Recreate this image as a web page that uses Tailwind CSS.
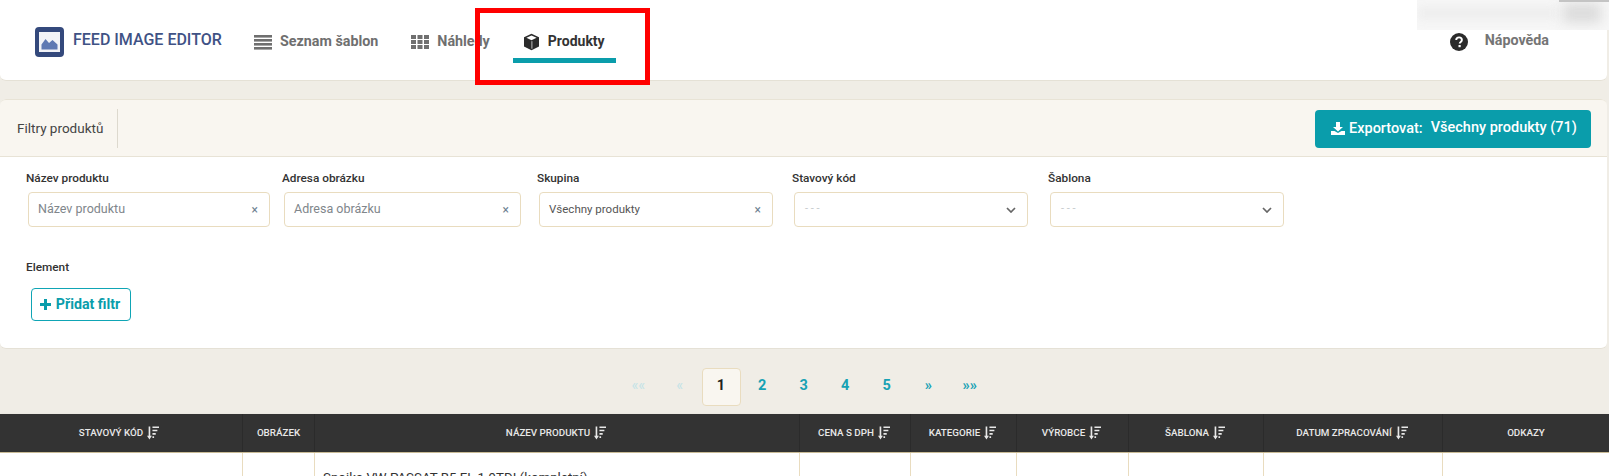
<!DOCTYPE html>
<html lang="cs">
<head>
  <meta charset="UTF-8">
  <title>Feed Image Editor</title>
  <script src="https://cdn.jsdelivr.net/npm/@tailwindcss/browser@4"></script>
</head>
<body class="relative h-[476px] overflow-hidden bg-[#f0ede6] font-['Roboto',sans-serif] text-[#333]">

  <!-- top nav -->
  <header class="flex h-[81px] w-[1607px] items-center rounded-b-md border-b border-[#e5e1d6] bg-white pl-[35px]">
    <svg class="mt-[3px] h-[30px] w-[29px]" viewBox="0 0 29 30">
      <rect width="29" height="30" rx="4" fill="#34497c"/>
      <rect x="4" y="5" width="21" height="20" fill="#f2f3f7"/>
      <path d="M6.500 22.500v-5l4-5.500 3.500 4 3.500-3 5 4.500v5z" fill="#5f79b3"/>
    </svg>
    <span class="ml-[9px] mb-[1px] w-[170px] text-[16px] font-medium text-[#3f5285]">FEED IMAGE EDITOR</span>
    <nav class="flex h-full items-center">
      <a class="ml-[11px] mt-[3px] flex items-center gap-[8px] text-[14.3px] font-bold text-[#6f6f6f]">
        <svg class="h-[16px] w-[18px]" viewBox="0 0 18 16" fill="#6f6f6f"><rect y="1" width="18" height="2.600"/><rect y="5" width="18" height="2.600"/><rect y="9" width="18" height="2.600"/><rect y="13" width="18" height="2.600"/></svg>
        Seznam šablon
      </a>
      <a class="ml-[33px] mt-[3px] flex items-center gap-[8px] text-[14.3px] font-bold text-[#6f6f6f]">
        <svg class="h-[16px] w-[18px]" viewBox="0 0 18 16" fill="#6f6f6f"><rect y="1" width="5" height="4"/><rect x="6.500" y="1" width="5" height="4"/><rect x="13" y="1" width="5" height="4"/><rect y="6" width="5" height="4"/><rect x="6.500" y="6" width="5" height="4"/><rect x="13" y="6" width="5" height="4"/><rect y="11" width="5" height="4"/><rect x="6.500" y="11" width="5" height="4"/><rect x="13" y="11" width="5" height="4"/></svg>
        Náhledy
      </a>
      <a class="relative ml-[23px] flex h-[63px] w-[103px] items-center gap-[8px] self-start pl-[10px] pt-[20px] text-[14px] font-bold text-[#333]">
        <svg class="h-[18px] w-[17px]" viewBox="0 0 17 18"><path d="M8.500 .8 16 4.200v9.200L8.500 17.200 1 13.400V4.200z" fill="#2b2b2b"/><path d="M8.500 2.500 13.600 4.800 8.500 7.200 3.400 4.800z" fill="#fff"/><path d="M8.900 8.200v7.500" stroke="#fff" stroke-width=".7"/></svg>
        Produkty
        <span class="absolute bottom-0 left-0 h-[5px] w-full bg-[#0a9dab]"></span>
      </a>
    </nav>
    <div class="ml-auto mt-[3px] flex items-center gap-[17px] pr-[58px]">
      <svg class="h-[18px] w-[18px]" viewBox="0 0 18 18"><circle cx="9" cy="9" r="9" fill="#2b2b2b"/><path d="M6.200 7c0-1.700 1.300-2.600 2.900-2.600S11.900 5.400 11.900 7c0 2-2.200 2-2.200 3.600" fill="none" stroke="#fff" stroke-width="1.900"/><rect x="8.500" y="12" width="2.200" height="2.200" fill="#fff"/></svg>
      <span class="mb-[2px] text-[14.3px] font-bold text-[#757575]">Nápověda</span>
    </div>
  </header>

  <!-- filters -->
  <section class="mt-[18px] h-[250px] w-[1607px] rounded-md border-b border-[#e5e1d6] bg-white">
    <div class="flex h-[58px] items-center justify-between rounded-t-md border-y border-[#e8e3d6] bg-[#f9f6f0] pr-[16px]">
      <div class="mt-[1px] flex h-[39px] w-[118px] items-center border-r border-[#ddd9ce] pl-[17px] text-[13.5px] text-[#444]">Filtry produktů</div>
      <button class="mt-[1px] flex h-[38px] w-[276px] items-center rounded bg-[#0a9dab] pl-[16px] text-[14.5px] font-medium text-white">
        <svg class="mr-[4px] h-[13px] w-[14px]" viewBox="0 0 14 13" fill="#fff"><path d="M5 0h4v5h3L7 9.500 2 5h3z"/><path d="M0 9h3.500L7 11l3.500-2H14v4H0z"/></svg>
        <span class="mt-[1px]">Exportovat:</span><span class="ml-[8px] mb-[2px]">Všechny produkty (71)</span>
      </button>
    </div>

    <div class="flex pl-[26px] pt-[13px]">
      <div class="w-[256px]">
        <div class="text-[11.8px] leading-[16px] font-medium text-[#333]">Název produktu</div>
        <div class="ml-[2px] mt-[6px] flex h-[35px] w-[242px] items-center justify-between rounded border border-[#e9dcbf] pl-[9px] pr-[11px] text-[12.5px] text-[#80868b]">Název produktu <span class="text-[12px] text-[#6d8191]">×</span></div>
      </div>
      <div class="w-[255px]">
        <div class="text-[11.8px] leading-[16px] font-medium text-[#333]">Adresa obrázku</div>
        <div class="ml-[2px] mt-[6px] flex h-[35px] w-[237px] items-center justify-between rounded border border-[#e9dcbf] pl-[9px] pr-[11px] text-[12.5px] text-[#80868b]">Adresa obrázku <span class="text-[12px] text-[#6d8191]">×</span></div>
      </div>
      <div class="w-[255px]">
        <div class="text-[11.8px] leading-[16px] font-medium text-[#333]">Skupina</div>
        <div class="ml-[2px] mt-[6px] flex h-[35px] w-[234px] items-center justify-between rounded border border-[#e9dcbf] pl-[9px] pr-[11px] text-[11.5px] text-[#555]">Všechny produkty <span class="text-[12px] text-[#6d8191]">×</span></div>
      </div>
      <div class="w-[256px]">
        <div class="text-[11.8px] leading-[16px] font-medium text-[#333]">Stavový kód</div>
        <div class="ml-[2px] mt-[6px] flex h-[35px] w-[234px] items-center justify-between rounded border border-[#e9dcbf] pl-[10px] pr-[11px] text-[11px] text-[#c5c9cc]">- - -
          <svg class="h-[6px] w-[10px]" viewBox="0 0 10 6" fill="none" stroke="#666" stroke-width="1.700"><path d="M1 1l4 4 4-4"/></svg>
        </div>
      </div>
      <div>
        <div class="text-[11.8px] leading-[16px] font-medium text-[#333]">Šablona</div>
        <div class="ml-[2px] mt-[6px] flex h-[35px] w-[234px] items-center justify-between rounded border border-[#e9dcbf] pl-[10px] pr-[11px] text-[11px] text-[#c5c9cc]">- - -
          <svg class="h-[6px] w-[10px]" viewBox="0 0 10 6" fill="none" stroke="#666" stroke-width="1.700"><path d="M1 1l4 4 4-4"/></svg>
        </div>
      </div>
    </div>

    <div class="pl-[26px] pt-[32px] text-[11.8px] leading-[16px] font-medium text-[#333]">Element</div>
    <button class="ml-[31px] mt-[13px] flex h-[33px] w-[100px] items-center justify-center gap-[5px] rounded border border-[#0fa5b5] pr-[2px] text-[14.2px] font-bold text-[#0a9dab]">
      <svg class="h-[11px] w-[11px]" viewBox="0 0 11 11" fill="#0a9dab"><path d="M4 0h3v4h4v3H7v4H4V7H0V4h4z"/></svg>
      Přidat filtr
    </button>
  </section>

  <!-- pagination -->
  <div class="flex h-[65px] items-center justify-center pr-[1px] pt-[11px] text-[14.5px] font-bold text-[#17a2b4]">
    <a class="flex h-[38px] w-[41.5px] items-center justify-center pb-[3px] font-normal text-[#c3e3e6]">««</a>
    <a class="flex h-[38px] w-[41.5px] items-center justify-center pb-[3px] font-normal text-[#c3e3e6]">«</a>
    <a class="mx-[1px] flex h-[38px] w-[39px] items-center justify-center rounded border border-[#e9dcbf] bg-[#f9f6f0] pb-[3px] text-[#222]">1</a>
    <a class="flex h-[38px] w-[41.5px] items-center justify-center pb-[3px]">2</a>
    <a class="flex h-[38px] w-[41.5px] items-center justify-center pb-[3px]">3</a>
    <a class="flex h-[38px] w-[41.5px] items-center justify-center pb-[3px]">4</a>
    <a class="flex h-[38px] w-[41.5px] items-center justify-center pb-[3px]">5</a>
    <a class="flex h-[38px] w-[41.5px] items-center justify-center pb-[3px]">»</a>
    <a class="flex h-[38px] w-[41.5px] items-center justify-center pb-[3px]">»»</a>
  </div>

  <!-- table -->
  <div class="grid h-[39px] grid-cols-[243px_72px_485px_111px_106px_112px_135px_179px_166px] border-b border-[#c9bb96] bg-[#333] text-[9.8px] font-medium text-[#e8e8e8] shadow-[0_2px_4px_rgba(0,0,0,0.15)]">
    <div class="flex items-center justify-center gap-[4px] border-r border-[#2b2b2b] pr-[4px]">STAVOVÝ KÓD <svg class="h-[14px] w-[12px]" viewBox="0 0 11 12" fill="#e8e8e8"><path d="M1.500 0h1.500v8.500h1.500L2.250 12 0 8.500h1.500zM5 0h6v1.500H5zM5 3h4.500v1.500H5zM5 6h3v1.500H5zM5 9h1.500v1.500H5z"/></svg></div>
    <div class="flex items-center justify-center border-r border-[#2b2b2b]">OBRÁZEK</div>
    <div class="flex items-center justify-center gap-[4px] border-r border-[#2b2b2b] pr-[2px]">NÁZEV PRODUKTU <svg class="h-[14px] w-[12px]" viewBox="0 0 11 12" fill="#e8e8e8"><path d="M1.500 0h1.500v8.500h1.500L2.250 12 0 8.500h1.500zM5 0h6v1.500H5zM5 3h4.500v1.500H5zM5 6h3v1.500H5zM5 9h1.500v1.500H5z"/></svg></div>
    <div class="flex items-center justify-center gap-[4px] border-r border-[#2b2b2b] pr-[2px]">CENA S DPH <svg class="h-[14px] w-[12px]" viewBox="0 0 11 12" fill="#e8e8e8"><path d="M1.500 0h1.500v8.500h1.500L2.250 12 0 8.500h1.500zM5 0h6v1.500H5zM5 3h4.500v1.500H5zM5 6h3v1.500H5zM5 9h1.500v1.500H5z"/></svg></div>
    <div class="flex items-center justify-center gap-[4px] border-r border-[#2b2b2b] pr-[2px]">KATEGORIE <svg class="h-[14px] w-[12px]" viewBox="0 0 11 12" fill="#e8e8e8"><path d="M1.500 0h1.500v8.500h1.500L2.250 12 0 8.500h1.500zM5 0h6v1.500H5zM5 3h4.500v1.500H5zM5 6h3v1.500H5zM5 9h1.500v1.500H5z"/></svg></div>
    <div class="flex items-center justify-center gap-[4px] border-r border-[#2b2b2b] pr-[2px]">VÝROBCE <svg class="h-[14px] w-[12px]" viewBox="0 0 11 12" fill="#e8e8e8"><path d="M1.500 0h1.500v8.500h1.500L2.250 12 0 8.500h1.500zM5 0h6v1.500H5zM5 3h4.500v1.500H5zM5 6h3v1.500H5zM5 9h1.500v1.500H5z"/></svg></div>
    <div class="flex items-center justify-center gap-[4px] border-r border-[#2b2b2b] pr-[2px]">ŠABLONA <svg class="h-[14px] w-[12px]" viewBox="0 0 11 12" fill="#e8e8e8"><path d="M1.500 0h1.500v8.500h1.500L2.250 12 0 8.500h1.500zM5 0h6v1.500H5zM5 3h4.500v1.500H5zM5 6h3v1.500H5zM5 9h1.500v1.500H5z"/></svg></div>
    <div class="flex items-center justify-center gap-[4px] border-r border-[#2b2b2b] pr-[2px]">DATUM ZPRACOVÁNÍ <svg class="h-[14px] w-[12px]" viewBox="0 0 11 12" fill="#e8e8e8"><path d="M1.500 0h1.500v8.500h1.500L2.250 12 0 8.500h1.500zM5 0h6v1.500H5zM5 3h4.500v1.500H5zM5 6h3v1.500H5zM5 9h1.500v1.500H5z"/></svg></div>
    <div class="flex items-center justify-center">ODKAZY</div>
  </div>
  <div class="grid h-[23px] grid-cols-[243px_72px_485px_111px_106px_112px_135px_179px_166px] overflow-hidden bg-white text-[13.3px] text-[#333]">
    <div class="border-r border-[#e9dcbf]"></div>
    <div class="border-r border-[#e9dcbf]"></div>
    <div class="border-r border-[#e9dcbf] pl-[8px] pt-[15px]">Spojka VW PASSAT B5 FL 1.9TDI (kompletní)</div>
    <div class="border-r border-[#e9dcbf]"></div>
    <div class="border-r border-[#e9dcbf]"></div>
    <div class="border-r border-[#e9dcbf]"></div>
    <div class="border-r border-[#e9dcbf]"></div>
    <div class="border-r border-[#e9dcbf]"></div>
    <div></div>
  </div>

  <!-- annotation + blurred bit from the screenshot -->
  <div class="absolute left-[475px] top-[8px] h-[77px] w-[175px] border-[5px] border-[#f00]"></div>
  <div class="absolute right-0 top-0 h-[30px] w-[192px] overflow-hidden bg-[#f7f7f7]">
    <div class="absolute left-[0px] top-[6px] h-[14px] w-[140px] bg-[#eeeeee] blur-[5px]"></div>
    <div class="absolute right-[8px] top-[3px] h-[20px] w-[38px] bg-[#dcdcdc] blur-[6px]"></div>
    <div class="absolute right-[0px] top-0 h-[2px] w-[50px] bg-[#c4c4c4]"></div>
  </div>
</body>
</html>
